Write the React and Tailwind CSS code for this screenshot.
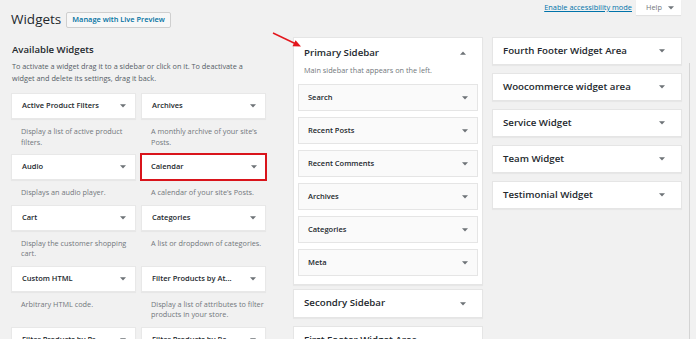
import React from "react";

const Down = ({ c = "#6d7276" }) => (
  <svg width="6" height="4" viewBox="0 0 6 4" className="shrink-0">
    <path d="M0 0.3H6L3 3.6Z" fill={c} />
  </svg>
);
const Up = ({ c = "#6d7276" }) => (
  <svg width="6" height="4" viewBox="0 0 6 4" className="shrink-0">
    <path d="M0 3.7H6L3 0.4Z" fill={c} />
  </svg>
);

const widgets = [
  ["Active Product Filters", ["Display a list of active product", "filters."]],
  ["Archives", ["A monthly archive of your site’s", "Posts."]],
  ["Audio", ["Displays an audio player."]],
  ["Calendar", ["A calendar of your site’s Posts."], true],
  ["Cart", ["Display the customer shopping", "cart."]],
  ["Categories", ["A list or dropdown of categories."]],
  ["Custom HTML", ["Arbitrary HTML code."]],
  ["Filter Products by At...", ["Display a list of attributes to filter", "products in your store."]],
  ["Filter Products by Pr...", ["Display a slider to filter products"]],
  ["Filter Products by Ra...", ["Display a list of star ratings"]],
];

const inner = ["Search", "Recent Posts", "Recent Comments", "Archives", "Categories", "Meta"];
const right = [
  "Fourth Footer Widget Area",
  "Woocommerce widget area",
  "Service Widget",
  "Team Widget",
  "Testimonial Widget",
];

export default function App() {
  return (
    <div className="relative w-[696px] h-[339px] overflow-hidden bg-[#f1f1f1] text-[#23282d] font-['Open_Sans',sans-serif]">
      {/* header */}
      <div className="flex justify-between h-[37px]">
        <div className="flex items-center gap-[5px] pl-[11px] pt-[10px] self-start">
          <h1 className="text-[13.5px] leading-[19px] font-normal">Widgets</h1>
          <div className="h-[16px] px-[5px] flex items-center bg-[#f7f7f7] border border-[#cfcfcf] rounded-[2px] text-[7.4px] font-semibold text-[#0071a1] whitespace-nowrap">
            Manage with Live Preview
          </div>
        </div>
        <div className="flex items-start gap-[4px] pr-[15px]">
          <a className="mt-[2px] text-[7.4px] leading-[11px] text-[#0073aa] underline whitespace-nowrap">
            Enable accessibility mode
          </a>
          <div className="w-[45px] h-[15px] bg-white shadow-[0_1px_1px_rgba(0,0,0,0.06)] flex items-center pl-[10px] gap-[6px] text-[7.4px] text-[#72777c]">
            <span>Help</span>
            <Down c="#72777c" />
          </div>
        </div>
      </div>

      <div className="flex items-start">
        {/* available widgets */}
        <div className="w-[255px] ml-[11px]">
          <h2 className="mt-[6px] ml-[1px] text-[9.6px] leading-[14px] font-semibold whitespace-nowrap">
            Available Widgets
          </h2>
          <p className="mt-[4px] ml-[1px] text-[7.3px] leading-[11.5px] text-[#555d66] whitespace-nowrap">
            To activate a widget drag it to a sidebar or click on it. To deactivate a
            <br />
            widget and delete its settings, drag it back.
          </p>
          <div className="mt-[9px] grid grid-cols-[125px_125px] gap-x-[5px] items-start">
            {widgets.map(([t, d, hl]) => (
              <div key={t}>
                <div
                  className={
                    "h-[26px] bg-white flex items-center justify-between pl-[10px] pr-[9px] shadow-[0_1px_1px_rgba(0,0,0,0.04)] " +
                    (hl ? "outline-2 outline-[#d9141b] -outline-offset-1" : "border border-[#e8e8e8]")
                  }
                >
                  <span className="text-[7.5px] font-semibold whitespace-nowrap">{t}</span>
                  <Down />
                </div>
                <p className="pt-[7px] pb-[7px] pl-[10px] text-[7.3px] leading-[10.5px] text-[#72777c] whitespace-nowrap">
                  {d.map((l, i) => (
                    <React.Fragment key={i}>
                      {i > 0 && <br />}
                      {l}
                    </React.Fragment>
                  ))}
                </p>
              </div>
            ))}
          </div>
        </div>

        {/* middle column */}
        <div className="ml-[27px] w-[190px] flex flex-col">
          <div className="bg-white border border-[#e5e5e5] shadow-[0_1px_1px_rgba(0,0,0,0.04)] px-[4px] pb-[8px]">
            <div className="flex items-center justify-between pl-[6px] pr-[12px] pt-[8px]">
              <span className="text-[9.7px] leading-[14px] font-semibold whitespace-nowrap">Primary Sidebar</span>
              <Up />
            </div>
            <p className="mt-[5px] pl-[6px] text-[7.3px] leading-[11px] text-[#72777c] whitespace-nowrap">
              Main sidebar that appears on the left.
            </p>
            <div className="mt-[8px] flex flex-col gap-[6px]">
              {inner.map((t) => (
                <div
                  key={t}
                  className="h-[27px] bg-[#fafafa] border border-[#e5e5e5] flex items-center justify-between pl-[9px] pr-[9px]"
                >
                  <span className="text-[7.5px] font-semibold whitespace-nowrap">{t}</span>
                  <Down />
                </div>
              ))}
            </div>
          </div>
          <div className="mt-[4px] h-[29px] bg-white border border-[#e5e5e5] shadow-[0_1px_1px_rgba(0,0,0,0.04)] flex items-center justify-between pl-[10px] pr-[16px]">
            <span className="text-[9.7px] font-semibold whitespace-nowrap">Secondry Sidebar</span>
            <Down />
          </div>
          <div className="mt-[8px] h-[29px] bg-white border border-[#e5e5e5] flex items-center justify-between pl-[10px] pr-[16px]">
            <span className="text-[9.7px] font-semibold whitespace-nowrap">First Footer Widget Area</span>
            <Down />
          </div>
        </div>

        {/* right column */}
        <div className="ml-[9px] w-[190px] flex flex-col gap-[8px]">
          {right.map((t) => (
            <div
              key={t}
              className="h-[28px] bg-white border border-[#e5e5e5] shadow-[0_1px_1px_rgba(0,0,0,0.04)] flex items-center justify-between pl-[10px] pr-[16px]"
            >
              <span className="text-[9.7px] font-semibold whitespace-nowrap">{t}</span>
              <Down />
            </div>
          ))}
        </div>
      </div>

      {/* scrollbar edge */}
      <div className="absolute left-[689px] top-[63px] w-[1px] h-[276px] bg-[#d4d4d4]" />

      {/* red arrow */}
      <svg className="absolute left-[270px] top-[30px]" width="36" height="22" viewBox="0 0 36 22">
        <line x1="3" y1="3" x2="25" y2="13.5" stroke="#e3161c" strokeWidth="1.4" />
        <path d="M31 16.5L22.5 16.3L25.6 10.2Z" fill="#e3161c" />
      </svg>
    </div>
  );
}
